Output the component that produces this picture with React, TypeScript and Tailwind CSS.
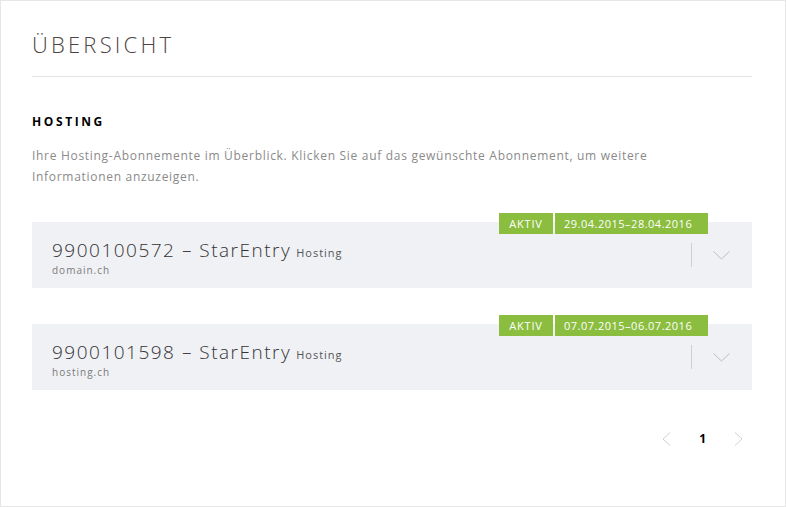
import React from 'react';

interface Subscription {
  id: string;
  product: string;
  type: string;
  domain: string;
  status: string;
  period: string;
}

const subscriptions: Subscription[] = [
  { id: '9900100572', product: 'StarEntry', type: 'Hosting', domain: 'domain.ch', status: 'AKTIV', period: '29.04.2015–28.04.2016' },
  { id: '9900101598', product: 'StarEntry', type: 'Hosting', domain: 'hosting.ch', status: 'AKTIV', period: '07.07.2015–06.07.2016' },
];

function Chevron({ dir, className }: { dir: 'down' | 'left' | 'right'; className?: string }) {
  if (dir === 'down') {
    return (
      <svg width="17" height="9" viewBox="0 0 17 9" className={className}>
        <path d="M0.5 0.5 L8.5 8 L16.5 0.5" fill="none" stroke="currentColor" strokeWidth="1" />
      </svg>
    );
  }
  return (
    <svg width="9" height="14" viewBox="0 0 9 14" className={className}>
      <path d={dir === 'left' ? 'M8 0.5 L1 7 L8 13.5' : 'M1 0.5 L8 7 L1 13.5'} fill="none" stroke="currentColor" strokeWidth="1" />
    </svg>
  );
}

export default function App() {
  return (
    <div
      className="w-[786px] h-[507px] bg-white border border-[#e6e6e6] pl-[31px] pr-[33px] pt-[28px]"
      style={{ fontFamily: '"Open Sans", "Noto Sans", sans-serif' }}
    >
      <div className="pb-[17px] border-b border-[#e3e3e3]">
        <h1 className="text-[22px] leading-[30px] font-light tracking-[3.2px] text-[#4d4440]">ÜBERSICHT</h1>
      </div>

      <h2 className="mt-[37px] text-[12px] leading-[16px] font-bold tracking-[2.6px] text-black">HOSTING</h2>
      <p className="mt-[15px] text-[12px] leading-[21px] text-[#8a8a8a] tracking-[0.7px] w-[690px]">
        Ihre Hosting-Abonnemente im Überblick. Klicken Sie auf das gewünschte Abonnement, um weitere Informationen anzuzeigen.
      </p>

      <div className="mt-[35px] flex flex-col gap-[36px]">
        {subscriptions.map((s) => (
          <div key={s.id} className="relative h-[66px] bg-[#f0f1f5] flex items-center pl-[20px] pr-[22px]">
            <div className="absolute top-[-9px] right-[44px] flex gap-[2px] text-white text-[11px] leading-[21px]">
              <span className="bg-[#8bbd3f] w-[54px] text-center tracking-[0.8px]">{s.status}</span>
              <span className="bg-[#8bbd3f] pl-[9px] w-[153px] tracking-[0.5px]">{s.period}</span>
            </div>
            <div className="flex-1 pt-[2px]">
              <div className="flex items-baseline gap-[5px] h-[27px]">
                <span className="text-[19px] leading-[27px] font-light tracking-[1.5px] text-[#333]">
                  {s.id} – {s.product}
                </span>
                <span className="text-[11px] leading-[14px] tracking-[1px] text-[#555]">{s.type}</span>
              </div>
              <div className="text-[10px] leading-[12px] text-[#7a7a7a] tracking-[1px]">{s.domain}</div>
            </div>
            <div className="w-px h-[24px] bg-[#cfcfcf]" />
            <Chevron dir="down" className="ml-[21px] text-[#bdbdbd]" />
          </div>
        ))}
      </div>

      <div className="mt-[39px] flex items-center justify-end gap-[28px] pr-[9px] h-[20px]">
        <Chevron dir="left" className="text-[#d0d0d0]" />
        <span className="text-[12px] font-bold text-black">1</span>
        <Chevron dir="right" className="text-[#d0d0d0]" />
      </div>
    </div>
  );
}
